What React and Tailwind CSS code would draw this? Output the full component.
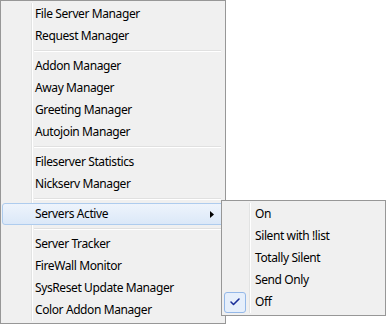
import { Check } from "lucide-react";

const groups = [
  ["File Server Manager", "Request Manager"],
  ["Addon Manager", "Away Manager", "Greeting Manager", "Autojoin Manager"],
  ["Fileserver Statistics", "Nickserv Manager"],
  ["Servers Active"],
  ["Server Tracker", "FireWall Monitor", "SysReset Update Manager", "Color Addon Manager"],
];

const subItems = ["On", "Silent with !list", "Totally Silent", "Send Only", "Off"];

function Separator() {
  return (
    <div className="h-2 flex flex-col justify-center pl-[31px] pr-[2px]">
      <div className="h-px bg-[#e0e0e0]" />
      <div className="h-px bg-white" />
    </div>
  );
}

function Item({ label, active }) {
  if (active) {
    return (
      <div className="h-[22px] flex items-center rounded-[3px] border border-[#aeccee] bg-gradient-to-b from-[#eef4fc] to-[#dbe8f8] -mx-px pl-[32px] pr-2">
        <span className="flex-1">{label}</span>
        <svg width="4" height="7" viewBox="0 0 4 7" className="mr-[1px]">
          <path d="M0 0 L4 3.5 L0 7 Z" fill="#000" />
        </svg>
      </div>
    );
  }
  return <div className="h-[22px] flex items-center pl-[32px]">{label}</div>;
}

export default function App() {
  return (
    <div
      className="relative w-[386px] h-[324px] bg-white text-[12px] tracking-[-0.4px] text-black overflow-hidden"
      style={{ fontFamily: '"Noto Sans", "DejaVu Sans", sans-serif' }}
    >
      {/* main menu */}
      <div className="relative w-[226px] h-[324px] border border-[#979797] bg-[#f0f0f0] px-[2px] py-[2px]">
        <div className="absolute left-[30px] top-[2px] bottom-[2px] w-px bg-[#e2e3e3]" />
        <div className="absolute left-[31px] top-[2px] bottom-[2px] w-px bg-white" />
        <div className="relative">
          {groups.map((g, gi) => (
            <div key={gi}>
              {gi > 0 && <Separator />}
              {g.map((label) => (
                <Item key={label} label={label} active={label === "Servers Active"} />
              ))}
            </div>
          ))}
        </div>
      </div>

      {/* submenu */}
      <div className="absolute left-[221px] top-[200px] w-[165px] h-[116px] border border-[#979797] bg-[#f0f0f0] px-[2px] py-[2px]">
        <div className="absolute left-[27px] top-[2px] bottom-[2px] w-px bg-[#e2e3e3]" />
        <div className="absolute left-[28px] top-[2px] bottom-[2px] w-px bg-white" />
        <div className="relative">
          {subItems.map((s) => (
            <div key={s} className="h-[22px] flex items-center">
              <div className="w-[28px] flex justify-start">
                {s === "Off" && (
                  <div className="w-[22px] h-[21px] rounded-[3px] border border-[#94b8e8] bg-[#e6effb] flex items-center justify-center">
                    <Check className="w-[12px] h-[12px] text-[#1b2f9a]" strokeWidth={3.2} />
                  </div>
                )}
              </div>
              <span className="pl-[3px]">{s}</span>
            </div>
          ))}
        </div>
      </div>
    </div>
  );
}
